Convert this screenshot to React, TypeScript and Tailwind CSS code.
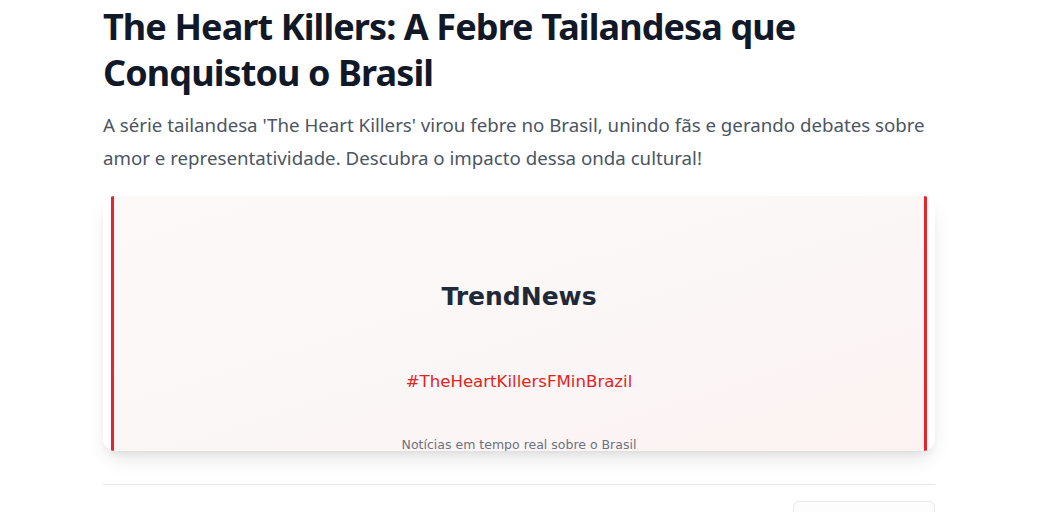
export default function App() {
  return (
    <div className="min-h-screen bg-white font-['Noto_Sans',sans-serif]">
      <article className="ml-[103px] w-[832px] pt-[4px]">
        <h1 className="text-[36px] leading-[46px] font-bold tracking-tight text-[#111827]">
          The Heart Killers: A Febre Tailandesa que Conquistou o Brasil
        </h1>
        <p className="mt-[12px] text-[18.7px] leading-[33px] text-[#4b5563]">
          A série tailandesa 'The Heart Killers' virou febre no Brasil, unindo fãs e gerando debates sobre amor e representatividade. Descubra o impacto dessa onda cultural!
        </p>

        <figure className="mt-[22px] h-[255px] overflow-hidden rounded-xl bg-white shadow-[0_10px_20px_-4px_rgba(0,0,0,0.12),0_4px_8px_-4px_rgba(0,0,0,0.08)]">
          <div className="mx-[8px] flex h-full flex-col items-center border-x-[3px] border-[#e3262b] bg-gradient-to-br from-[#fdf9f9] via-[#fbf7f7] to-[#fdf2f2] font-['DejaVu_Sans',sans-serif]">
            <div className="mt-[86px] text-[25px] leading-[30px] font-bold text-[#1f2937]">TrendNews</div>
            <div className="mt-[60px] text-[16.6px] leading-[20px] text-[#e02424]">#TheHeartKillersFMinBrazil</div>
            <div className="mt-[45px] text-[12.5px] leading-[16px] text-[#6b7280]">Notícias em tempo real sobre o Brasil</div>
          </div>
        </figure>

        <div className="mt-[33px] border-t border-[#e5e7eb]" />
        <div className="mt-[16px] flex justify-end">
          <div className="h-[36px] w-[142px] rounded-md border border-[#e5e7eb] bg-[#fdfdfd]" />
        </div>
      </article>
    </div>
  )
}
